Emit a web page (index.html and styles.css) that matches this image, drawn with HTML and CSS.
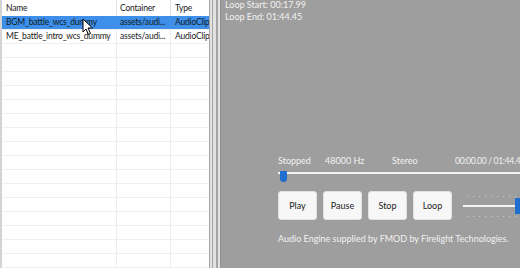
FILE: index.html
```html
<!DOCTYPE html>
<html lang="en">
<head>
    <meta charset="UTF-8">
    <title>Audio Preview</title>
    <link rel="stylesheet" href="styles.css">
</head>
<body>
    <div class="list">
        <div class="row head">
            <div class="cell name">Name</div>
            <div class="cell container">Container</div>
            <div class="cell type">Type</div>
        </div>
        <div class="row selected">
            <div class="cell name">BGM_battle_wcs_dummy</div>
            <div class="cell container">assets/audi...</div>
            <div class="cell type">AudioClip</div>
        </div>
        <div class="row">
            <div class="cell name">ME_battle_intro_wcs_dummy</div>
            <div class="cell container">assets/audi...</div>
            <div class="cell type">AudioClip</div>
        </div>
        <div class="row empty"><div class="cell name"></div><div class="cell container"></div><div class="cell type"></div></div>
        <div class="row empty"><div class="cell name"></div><div class="cell container"></div><div class="cell type"></div></div>
        <div class="row empty"><div class="cell name"></div><div class="cell container"></div><div class="cell type"></div></div>
        <div class="row empty"><div class="cell name"></div><div class="cell container"></div><div class="cell type"></div></div>
        <div class="row empty"><div class="cell name"></div><div class="cell container"></div><div class="cell type"></div></div>
        <div class="row empty"><div class="cell name"></div><div class="cell container"></div><div class="cell type"></div></div>
        <div class="row empty"><div class="cell name"></div><div class="cell container"></div><div class="cell type"></div></div>
        <div class="row empty"><div class="cell name"></div><div class="cell container"></div><div class="cell type"></div></div>
        <div class="row empty"><div class="cell name"></div><div class="cell container"></div><div class="cell type"></div></div>
        <div class="row empty"><div class="cell name"></div><div class="cell container"></div><div class="cell type"></div></div>
        <div class="row empty"><div class="cell name"></div><div class="cell container"></div><div class="cell type"></div></div>
        <div class="row empty"><div class="cell name"></div><div class="cell container"></div><div class="cell type"></div></div>
        <div class="row empty"><div class="cell name"></div><div class="cell container"></div><div class="cell type"></div></div>
        <div class="row empty"><div class="cell name"></div><div class="cell container"></div><div class="cell type"></div></div>
        <div class="row empty"><div class="cell name"></div><div class="cell container"></div><div class="cell type"></div></div>
        <div class="row empty"><div class="cell name"></div><div class="cell container"></div><div class="cell type"></div></div>

        <!-- mouse pointer over the selected row -->
        <svg class="cursor" width="12" height="18" viewBox="0 0 12 18">
            <path d="M1 1 L1 14 L4 11 L6.5 16.5 L8.5 15.5 L6 10 L10.5 10 Z" fill="#fff" stroke="#000" stroke-width="1"/>
        </svg>
    </div>

    <div class="splitter">
        <span></span><span></span><span></span>
    </div>

    <div class="preview">
        <div class="info">
            <div>Loop Start: 00:17.99</div>
            <div>Loop End: 01:44.45</div>
        </div>

        <div class="player">
            <div class="status">
                <span class="s-state">Stopped</span>
                <span class="s-rate">48000 Hz</span>
                <span class="s-chan">Stereo</span>
                <span class="s-time">00:00.00 / 01:44.45</span>
            </div>

            <div class="seek">
                <div class="track"></div>
                <div class="thumb"></div>
            </div>

            <div class="controls">
                <button>Play</button>
                <button>Pause</button>
                <button>Stop</button>
                <button>Loop</button>
                <div class="volume">
                    <div class="ticks top"></div>
                    <div class="track"></div>
                    <div class="ticks bottom"></div>
                    <div class="vthumb"></div>
                </div>
            </div>

            <div class="credit">Audio Engine supplied by FMOD by Firelight Technologies.</div>
        </div>
    </div>
</body>
</html>
```

FILE: styles.css
```css
body {
    margin: 0;
    width: 520px;
    height: 268px;
    overflow: hidden;
    display: flex;
    font-family: Lato, "Open Sans", sans-serif;
    font-size: 9px;
    background-color: #9e9e9e;
}

.list {
    position: relative;
    flex-shrink: 0;
    width: 207px;
    border-left: 2px solid #d4d4d4;
    background-color: #ffffff;
    color: #1a1a1a;
    font-size: 8.5px;
    letter-spacing: -0.2px;
}

.row {
    display: flex;
    height: 13px;
    line-height: 13px;
    border-bottom: 1px solid #f0f0f0;
}

.row.head {
    height: 16px;
    line-height: 16px;
    border-bottom: none;
}

.row.selected {
    background-color: #3d8fe9;
    color: #0f1a26;
}

.cell {
    white-space: nowrap;
    overflow: hidden;
    box-sizing: border-box;
}

.name {
    width: 115px;
    padding-left: 4px;
    border-right: 1px solid #ededed;
}

.container {
    width: 54px;
    padding-left: 3px;
    border-right: 1px solid #ededed;
}

.type {
    flex: 1;
    padding-left: 4px;
}

.row.head .cell {
    border-right-color: #e4e4e4;
}

.row.selected .cell {
    border-right-color: #3d8fe9;
}

.cursor {
    position: absolute;
    left: 80px;
    top: 18px;
}

.splitter {
    flex-shrink: 0;
    width: 11px;
    display: flex;
    gap: 2px;
    background-color: #e2e2e2;
}

.splitter span {
    width: 1px;
    background-color: #a4a4a4;
}

.splitter span:nth-child(3) {
    margin-left: 1px;
    width: 2px;
}

.preview {
    flex: 1;
    min-width: 0;
    overflow: hidden;
    display: flex;
    flex-direction: column;
    color: #f2f2f2;
    border-left: 1px solid #8e8e8e;
}

.info {
    padding-left: 4px;
    line-height: 12px;
    margin-top: -1px;
}

.player {
    margin-top: 132px;
    padding-left: 57px;
}

.status {
    display: flex;
    height: 12px;
    line-height: 12px;
}

.s-state { width: 47px; flex-shrink: 0; }
.s-rate { width: 67px; flex-shrink: 0; }
.s-chan { width: 63px; flex-shrink: 0; }
.s-time {
    white-space: nowrap;
    font-size: 8.5px;
    letter-spacing: -0.3px;
}

.seek {
    position: relative;
    height: 14px;
    margin-top: 3px;
}

.seek .track {
    margin-top: 5px;
    height: 2px;
    background-color: #f4f4f4;
}

.seek .thumb {
    position: absolute;
    left: 2px;
    top: -1px;
    width: 7px;
    height: 11px;
    background-color: #1f6fd1;
    border-radius: 1px 1px 4px 4px;
}

.controls {
    display: flex;
    gap: 6px;
    margin-top: 5px;
    align-items: center;
}

button {
    flex-shrink: 0;
    width: 39px;
    height: 29px;
    padding: 0;
    background-color: #f7f7f7;
    border: 1px solid #e2e2e2;
    border-radius: 3px;
    font-family: inherit;
    font-size: 9px;
    color: #222;
}

.volume {
    position: relative;
    flex: 1;
    height: 26px;
    margin-left: 5px;
}

.volume .track {
    position: absolute;
    left: 0;
    right: 0;
    top: 12px;
    height: 2px;
    background-color: #f4f4f4;
}

.ticks {
    position: absolute;
    left: 4px;
    right: 0;
    height: 1px;
    background-image: repeating-linear-gradient(to right, #cfcfcf 0, #cfcfcf 1px, transparent 1px, transparent 6px);
}

.ticks.top { top: 3px; }
.ticks.bottom { top: 23px; }

.vthumb {
    position: absolute;
    left: 52px;
    top: 5px;
    width: 8px;
    height: 16px;
    background-color: #1f6fd1;
}

.credit {
    margin-top: 13px;
    line-height: 12px;
}
```
